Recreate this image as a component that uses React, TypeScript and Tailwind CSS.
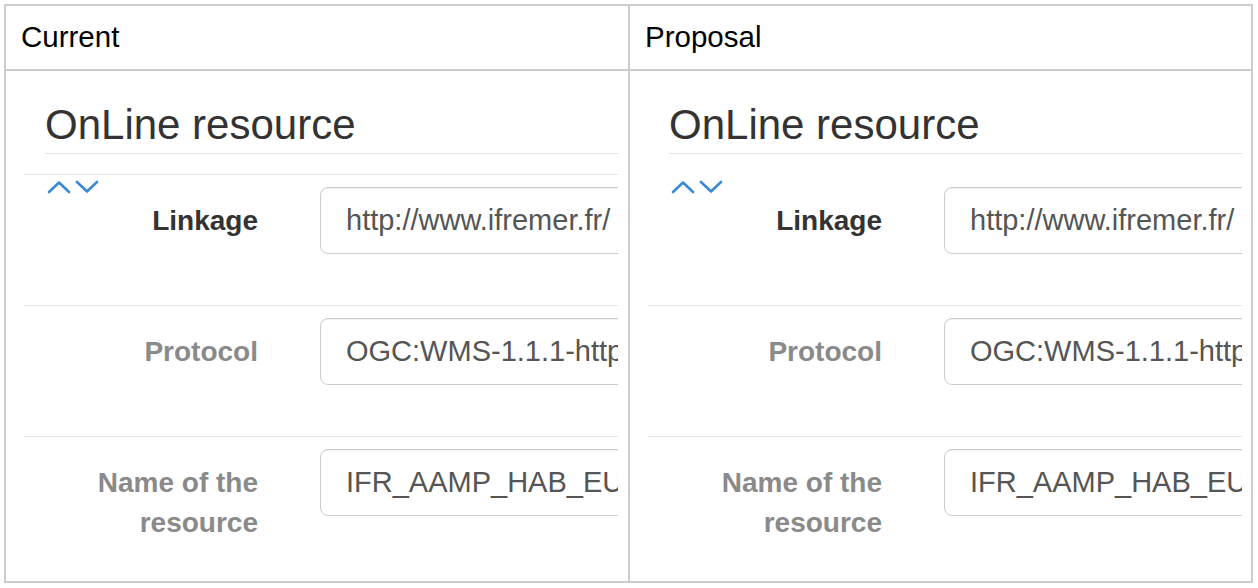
import React from 'react';

type Field = { label: string; value: string; strong?: boolean };

const fields: Field[] = [
  { label: 'Linkage', value: 'http://www.ifremer.fr/', strong: true },
  { label: 'Protocol', value: 'OGC:WMS-1.1.1-http' },
  { label: 'Name of the resource', value: 'IFR_AAMP_HAB_EUN' },
];

const Chevrons: React.FC = () => (
  <div className="absolute left-[23px] top-[5px] flex gap-[4px]">
    <svg width="24" height="14" viewBox="0 0 24 14" fill="none">
      <polyline points="2,12 12,2.5 22,12" stroke="#3a8ad8" strokeWidth="2.6" strokeLinecap="round" strokeLinejoin="round" />
    </svg>
    <svg width="24" height="14" viewBox="0 0 24 14" fill="none">
      <polyline points="2,2 12,11.5 22,2" stroke="#3a8ad8" strokeWidth="2.6" strokeLinecap="round" strokeLinejoin="round" />
    </svg>
  </div>
);

const Resource: React.FC<{ firstLine: boolean; padRight: string }> = ({ firstLine, padRight }) => (
  <div className={`h-full min-w-0 pl-[18px] ${padRight}`}>
    <div className="h-full overflow-hidden">
      <div className="ml-[21px] mt-[31px] border-b border-[#e5e5e5] pb-[5px]">
        <h2 className="whitespace-nowrap text-[42px] leading-[46px] font-normal text-[#333]">OnLine resource</h2>
      </div>
      <div className="mt-[20px]">
        {fields.map((f, i) => (
          <div
            key={f.label}
            className={`relative flex items-start border-t pt-[12px] pb-[51px] ${
              i === 0 && !firstLine ? 'border-transparent' : 'border-[#e6e6e6]'
            }`}
          >
            {i === 0 && <Chevrons />}
            <label
              className={`w-[234px] shrink-0 pt-[14px] text-right text-[28px] font-bold leading-[40px] ${
                f.strong ? 'text-[#333]' : 'text-[#8a8a8a]'
              }`}
            >
              {f.label}
            </label>
            <div className="ml-[62px] flex h-[67px] w-[420px] shrink-0 items-center rounded-[8px] border border-[#cccccc] bg-white pl-[25px] shadow-[inset_0_1px_1px_rgba(0,0,0,0.06)]">
              <span className="whitespace-nowrap text-[29px] text-[#555]">{f.value}</span>
            </div>
          </div>
        ))}
      </div>
    </div>
  </div>
);

export default function App() {
  return (
    <div className="h-[588px] w-[1258px] overflow-hidden bg-white pl-[4px] pt-[4px] font-['Liberation_Sans',Arial,Helvetica,sans-serif]">
      <div className="flex h-[579px] w-[1249px] flex-col border-2 border-[#cccccc]">
        <div className="flex h-[65px] shrink-0 border-b-2 border-[#cccccc]">
          <div className="flex w-[624px] shrink-0 items-center border-r-2 border-[#cccccc] pl-[15px] text-[29.5px] text-black">
            Current
          </div>
          <div className="flex min-w-0 flex-1 items-center pl-[15px] text-[29.5px] text-black">Proposal</div>
        </div>
        <div className="flex min-h-0 flex-1">
          <div className="w-[624px] shrink-0 border-r-2 border-[#cccccc]">
            <Resource firstLine padRight="pr-[10px]" />
          </div>
          <div className="min-w-0 flex-1">
            <Resource firstLine={false} padRight="pr-[9px]" />
          </div>
        </div>
      </div>
    </div>
  );
}
